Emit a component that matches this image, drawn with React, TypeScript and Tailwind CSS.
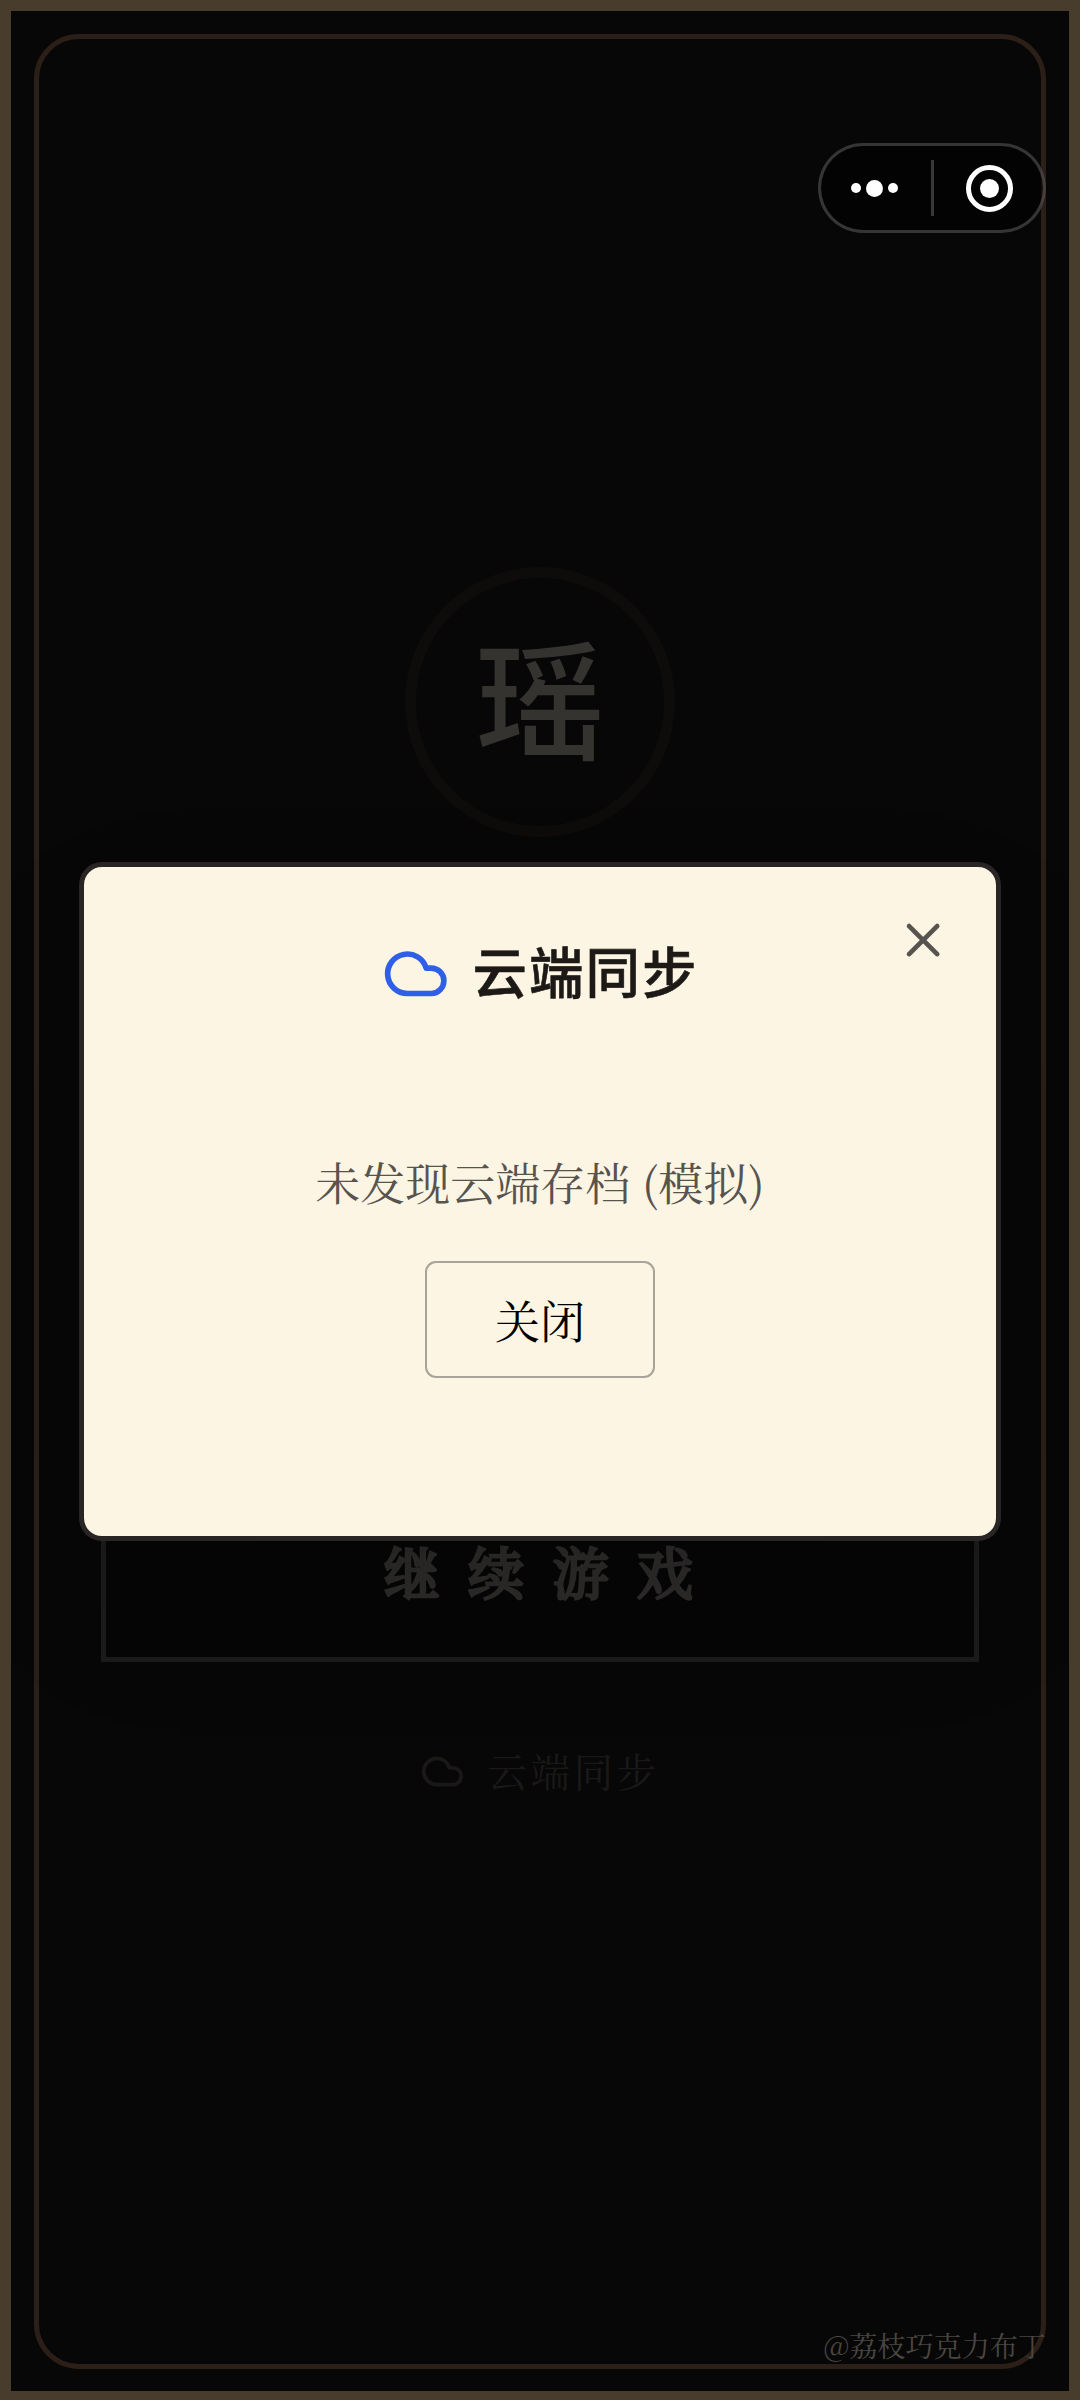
import React from "react";
import { Cloud, X } from "lucide-react";

const serif =
  "font-['Noto_Serif_CJK_SC','Noto_Serif_SC','Source_Han_Serif_SC','Noto_Sans_CJK_SC',serif]";
const sans = "font-['Noto_Sans_CJK_SC',sans-serif]";

function Capsule() {
  return (
    <div className="absolute left-[818px] top-[143px] flex h-[90px] w-[228px] items-center rounded-full border-[3px] border-white/20 bg-black/50">
      <div className="flex w-[112px] items-center justify-center gap-[5px] pr-[5px]">
        <span className="size-[10px] rounded-full bg-white" />
        <span className="size-[17px] rounded-full bg-white" />
        <span className="size-[10px] rounded-full bg-white" />
      </div>
      <span className="-ml-[2px] h-[56px] w-[3px] bg-[#383838]" />
      <div className="flex grow items-center justify-center pl-[1px]">
        <span className="flex size-[47px] items-center justify-center rounded-full border-[5px] border-white">
          <span className="size-[19px] rounded-full bg-white" />
        </span>
      </div>
    </div>
  );
}

function TitleScreen() {
  return (
    <main className="flex h-full flex-col items-center pt-[556px]">
      <div className={`${sans} flex size-[270px] items-center justify-center rounded-full border-[11px] border-[#0d0c0a] pb-[17px] text-[129px] leading-none font-medium text-[#353330]`}>
        瑶
      </div>
      <div className={`${serif} mt-[645px] flex h-[180px] w-[878px] justify-center border-[5px] border-[#1b1b1b] bg-[#060606] pt-[41px] text-[56.25px] leading-[84px] font-normal tracking-[28.125px] text-[#2e2d2b] [-webkit-text-stroke:3px_#2e2d2b]`}>
        <span className="-mr-[25px]">继续游戏</span>
      </div>
      <div className={`${serif} mt-[80px] flex items-center gap-[22.5px] text-[39.375px] leading-[56px] tracking-[3.9px] text-[#1a1917]`}>
        <Cloud size={45} className="mt-[2px]" />
        <span>云端同步</span>
      </div>
    </main>
  );
}

function SyncDialog() {
  return (
    <div className="absolute inset-0 flex flex-col items-center pt-[862px]">
      <section className="relative flex h-[679px] w-[922px] flex-col items-center rounded-[23px] border-[5px] border-[#292524] bg-[#fcf5e3] shadow-[0_70px_140px_-34px_rgba(0,0,0,0.25)]">
        <button className="absolute top-[45px] right-[45px]" aria-label="关闭">
          <X size={56.25} className="text-[#57534e]" />
        </button>
        <h2 className={`${sans} mt-[67px] flex h-[79px] items-center gap-[23.5px] text-[54.5px] leading-[79px] font-medium tracking-[1.95px] text-[#1c1917] [-webkit-text-stroke:0.6px_#1c1917]`}>
          <Cloud size={67.5} className="text-[#2f5fe8]" />
          <span className="-mt-[8px]">云端同步</span>
        </h2>
        <p className={`${serif} mt-[135px] text-[45px] leading-[67px] text-[#57534e]`}>
          未发现云端存档 (模拟)
        </p>
        <button className={`${serif} mt-[46px] h-[117px] w-[230px] rounded-[11px] border-2 border-[#a8a29a] text-[45px] leading-[67px] text-black`}>
          关闭
        </button>
      </section>
    </div>
  );
}

export default function App() {
  return (
    <div className="relative h-[2400px] w-[1080px] overflow-hidden border-[11px] border-b-[9px] border-[#483c2c] bg-[#070707]">
      <div className="absolute top-[23px] left-[23px] h-[2335px] w-[1012px] rounded-[45px] border-[5px] border-[#2c1f17]" />
      <TitleScreen />
      <div className="absolute -top-[11px] -left-[11px] h-[2400px] w-[1080px]">
        <SyncDialog />
        <Capsule />
        <span className={`${serif} absolute right-[34px] bottom-[34px] text-[28.125px] leading-[42px] whitespace-nowrap text-[#4a4641]`}>
          @荔枝巧克力布丁
        </span>
      </div>
    </div>
  );
}
